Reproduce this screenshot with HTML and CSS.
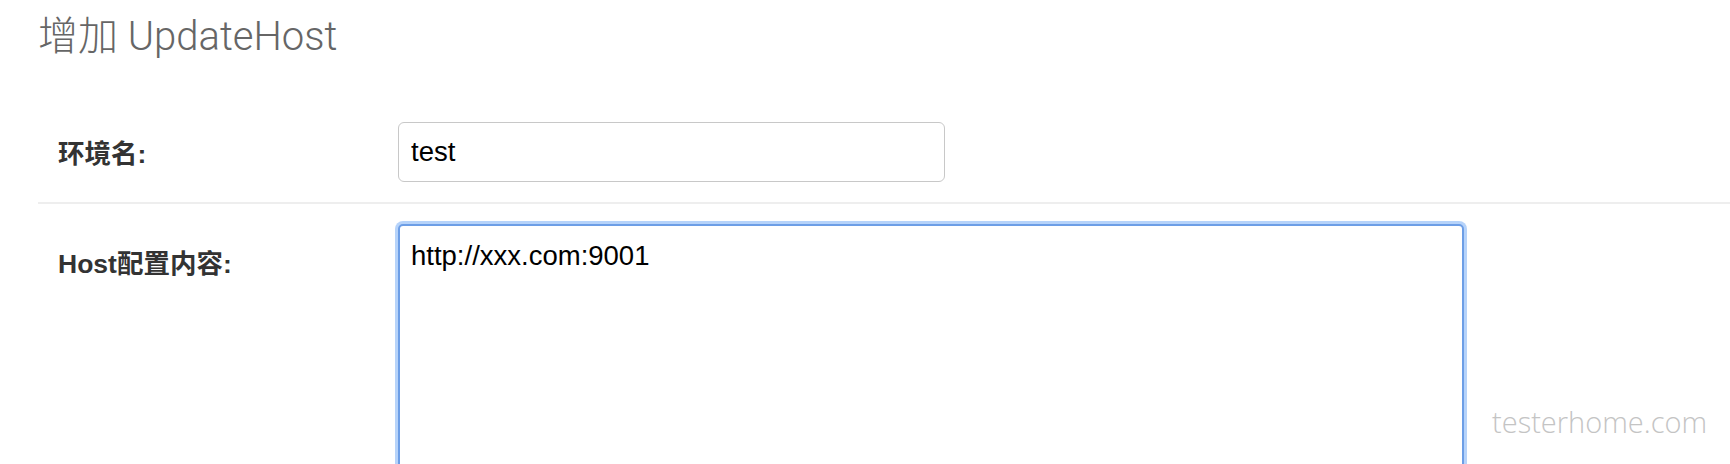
FILE: index.html
```html
<!DOCTYPE html>
<html lang="zh-CN">
<head>
    <meta charset="UTF-8">
    <meta name="viewport" content="width=device-width, initial-scale=1.0">
    <title>增加 UpdateHost</title>
    <link rel="stylesheet" href="styles.css">
</head>
<body>
    <div class="page">
        <h2 class="title">增加 UpdateHost</h2>

        <form class="host-form">
            <div class="form-row">
                <label class="form-label" for="env-name">环境名:</label>
                <input type="text" id="env-name" class="text-input" value="test">
            </div>

            <div class="form-row form-row-top">
                <label class="form-label" for="host-content">Host配置内容:</label>
                <textarea id="host-content" class="text-area">http://xxx.com:9001</textarea>
            </div>
        </form>
    </div>

    <div class="watermark">testerhome.com</div>
</body>
</html>
```

FILE: styles.css
```css
body {
    margin: 0;
    background-color: #fff;
    font-family: "Liberation Sans", "Noto Sans CJK SC", sans-serif;
    overflow: hidden;
}

.page {
    padding-left: 38px;
}

.title {
    margin: 13px 0 0;
    font-family: Roboto, "Noto Sans CJK SC", sans-serif;
    font-size: 40px;
    font-weight: 300;
    line-height: 47px;
    color: #666;
}

.host-form {
    margin-top: 42px;
}

.form-row {
    display: flex;
    align-items: center;
    padding: 20px 0 20px 20px;
    border-bottom: 2px solid #eee;
}

.form-row-top {
    align-items: flex-start;
    border-bottom: none;
}

.form-label {
    width: 340px;
    flex-shrink: 0;
    font-size: 26.5px;
    font-weight: bold;
    line-height: 36px;
    color: #333;
}

.form-row:first-child .form-label {
    margin-top: 4px;
}

.form-row-top .form-label {
    margin-top: 22px;
}

.text-input {
    box-sizing: border-box;
    width: 547px;
    height: 60px;
    padding: 0 12px;
    border: 1px solid #c8c8c8;
    border-radius: 6px;
    font-family: "Liberation Sans", sans-serif;
    font-size: 27.5px;
    color: #000;
    outline: none;
}

.text-area {
    box-sizing: border-box;
    width: 1066px;
    height: 300px;
    padding: 12px 11px;
    border: 2px solid #6d9ee6;
    border-radius: 5px;
    box-shadow: 0 0 0 3px #b6d3fa;
    font-family: "Liberation Sans", sans-serif;
    font-size: 27.5px;
    line-height: 1.3;
    color: #000;
    resize: none;
    outline: none;
}

.watermark {
    position: absolute;
    left: 1492px;
    top: 402px;
    font-family: "Open Sans", sans-serif;
    font-size: 29px;
    font-weight: 300;
    color: #c4c4c4;
}
```
